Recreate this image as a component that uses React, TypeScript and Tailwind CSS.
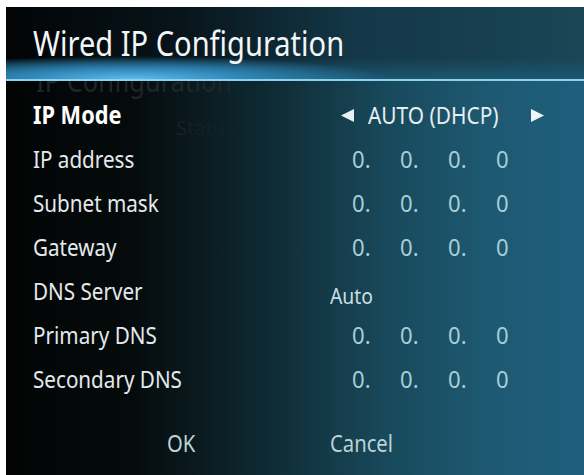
const rows = [
  { label: 'IP address', value: ['0.', '0.', '0.', '0'] },
  { label: 'Subnet mask', value: ['0.', '0.', '0.', '0'] },
  { label: 'Gateway', value: ['0.', '0.', '0.', '0'] },
  { label: 'DNS Server', value: 'Auto' },
  { label: 'Primary DNS', value: ['0.', '0.', '0.', '0'] },
  { label: 'Secondary DNS', value: ['0.', '0.', '0.', '0'] },
];

function Octets({ parts }: { parts: string[] }) {
  return (
    <div className="ml-[22px] grid grid-cols-[48px_48px_48px_50px] text-[24px] text-[#a9cdd6]">
      {parts.map((p, i) => (
        <span key={i} className="inline-block origin-left scale-x-[.92]">
          {p}
        </span>
      ))}
    </div>
  );
}

export default function App() {
  return (
    <div className="w-[584px] h-[475px] bg-white pt-[7px] pl-[6px] font-['Noto_Sans',sans-serif] overflow-hidden">
      <div className="h-full flex flex-col">
        {/* Header */}
        <header className="relative z-10 h-[74px] shrink-0 border-b-2 border-[#8ad2ee] bg-[radial-gradient(ellipse_55%_40%_at_22%_100%,#5cbbea_0%,#2f86b8_35%,transparent_80%),linear-gradient(180deg,transparent_70%,#1c5670_100%),linear-gradient(90deg,#020405_0%,#07141a_30%,#133746_60%,#1a4656_100%)] pl-[27px] pt-[16px]">
          <h1 className="inline-block origin-left scale-x-[.83] text-[35px] leading-[40px] text-[#f2f6f8] whitespace-nowrap">
            Wired IP Configuration
          </h1>
        </header>

        {/* Body */}
        <div className="relative flex-1 overflow-hidden bg-[linear-gradient(90deg,#020404_0%,#050b0c_22%,#0f2a33_45%,#18485a_65%,#1d5870_82%,#1f5f7e_100%)] pl-[27px] pt-[12px]">
          {/* ghost of the menu behind */}
          <div className="absolute left-[30px] top-[-20px] text-[30px] leading-[40px] text-[#1f2528] whitespace-nowrap origin-left scale-x-[.85]">
            IP Configuration
          </div>
          <div className="absolute left-[170px] top-[33px] text-[20px] leading-[28px] text-[#142024] whitespace-nowrap">
            Status
          </div>

          <div className="relative flex h-[44px] items-center">
            <div className="w-[297px]">
              <span className="inline-block origin-left scale-x-[.87] text-[25px] font-bold text-white">IP Mode</span>
            </div>
            <svg width="15" height="15" viewBox="0 0 15 15" className="ml-[10px]">
              <polygon points="14,1 14,14 1,7.5" fill="#e8f0f3" />
            </svg>
            <span className="ml-[13px] inline-block w-[150px] origin-left scale-x-[.87] text-[24px] text-[#e6eef1] whitespace-nowrap">
              AUTO (DHCP)
            </span>
            <svg width="15" height="15" viewBox="0 0 15 15" className="ml-[12px]">
              <polygon points="1,1 1,14 14,7.5" fill="#eef4f6" />
            </svg>
          </div>

          {rows.map((r) => (
            <div key={r.label} className="relative flex h-[44px] items-center">
              <div className="w-[297px]">
                <span className="inline-block origin-left scale-x-[.86] text-[24px] text-[#e4e9ec] whitespace-nowrap">
                  {r.label}
                </span>
              </div>
              {Array.isArray(r.value) ? (
                <Octets parts={r.value} />
              ) : (
                <span className="mt-[8px] inline-block origin-left scale-x-[.88] text-[22px] text-[#c9dde2]">{r.value}</span>
              )}
            </div>
          ))}

          <div className="mt-[20px] flex h-[44px] items-center text-[23px] text-[#bcd2d8]">
            <div className="w-[297px] text-center">
              <span className="inline-block scale-x-[.88]">OK</span>
            </div>
            <span className="inline-block origin-left scale-x-[.88]">Cancel</span>
          </div>
        </div>
      </div>
    </div>
  );
}
